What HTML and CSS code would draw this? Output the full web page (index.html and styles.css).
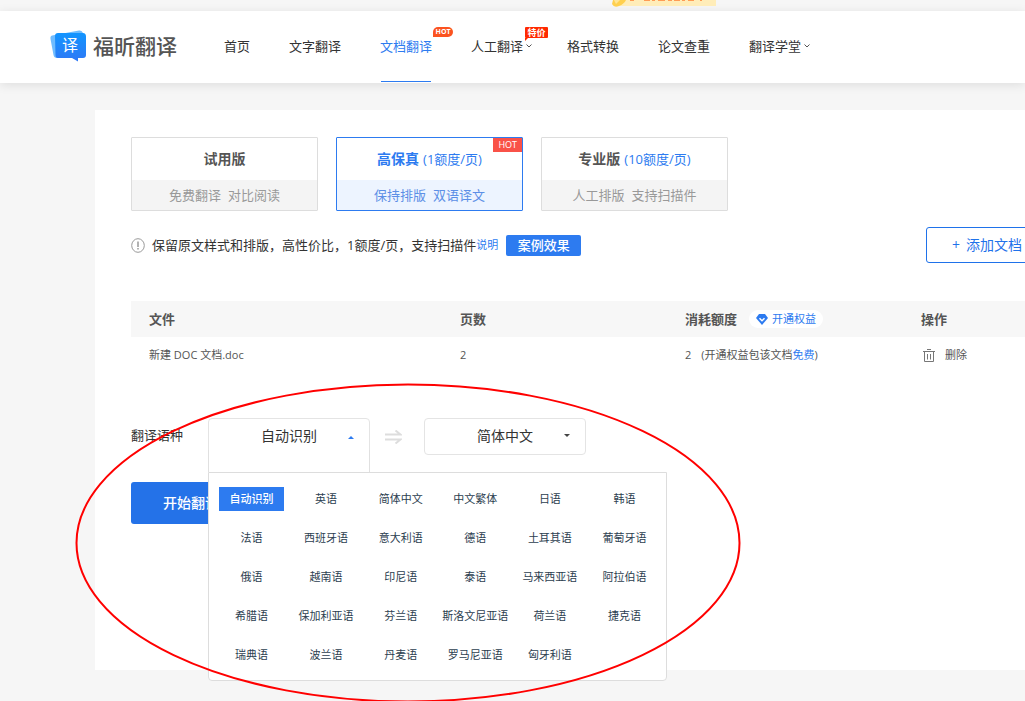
FILE: index.html
```html
<!DOCTYPE html>
<html lang="zh-CN">
<head>
<meta charset="utf-8">
<title>福昕翻译</title>
<link rel="stylesheet" href="styles.css">
</head>
<body>
<div class="page">
  <div class="promo">
    <svg class="promo-art" width="108" height="7" viewBox="0 0 108 7" aria-hidden="true">
      <path d="M12 0H106V6H8z" fill="#ffedb9"/>
      <path d="M3 0H16Q14 4 9 6Q4 8 2 4z" fill="#ffd04f"/>
      <path d="M4 0H10L6 4z" fill="#ffe596"/>
      <path d="M20 0h4M34 0h6M42 0h3M48 0h7M58 0h4M64 0h6M72 0h3M78 0h6M90 0h2" stroke="#ff9c55" stroke-width="2"/>
    </svg>
  </div>

  <header class="header">
    <a class="logo" href="#">
      <span class="logo-mark">
        <svg width="37" height="32" viewBox="0 0 37 32" aria-hidden="true">
          <defs>
            <linearGradient id="mark" x1="0" y1="0" x2="0" y2="1">
              <stop offset="0" stop-color="#1295ff"/><stop offset="1" stop-color="#2f78f5"/>
            </linearGradient>
          </defs>
          <path d="M2 5.500L29 .5Q32 0 33 3L35 24L7 28Q4 28 3.500 25L.5 9Q0 6 2 5.500z" fill="#6fbcff"/>
          <path d="M8 3H33Q36 3 36 6.500V25Q36 28 33 28H28V31.500L22 28H8Q5.500 28 5.500 25L5 6Q5 3 8 3z" fill="url(#mark)"/>
        </svg>
        <span class="logo-glyph">译</span>
      </span>
      <span class="logo-name">福昕翻译</span>
    </a>
    <nav class="nav">
      <a class="nav-item" href="#">首页</a>
      <a class="nav-item" href="#">文字翻译</a>
      <a class="nav-item active" href="#">文档翻译<span class="badge badge-hot">HOT</span></a>
      <a class="nav-item" href="#">人工翻译<svg class="chevron" width="6" height="4" viewBox="0 0 6 4" aria-hidden="true"><path d="M.5 .5L3 3L5.500 .5"/></svg><span class="badge badge-sale">特价</span></a>
      <a class="nav-item" href="#">格式转换</a>
      <a class="nav-item" href="#">论文查重</a>
      <a class="nav-item" href="#">翻译学堂<svg class="chevron" width="6" height="4" viewBox="0 0 6 4" aria-hidden="true"><path d="M.5 .5L3 3L5.500 .5"/></svg></a>
    </nav>
  </header>

  <main class="card">
    <div class="plans">
      <button class="plan" type="button">
        <span class="plan-title"><b>试用版</b></span>
        <span class="plan-desc"><span>免费翻译</span><span>对比阅读</span></span>
      </button>
      <button class="plan selected" type="button">
        <span class="plan-title"><b>高保真</b><span class="price">(1额度/页)</span></span>
        <span class="plan-desc"><span>保持排版</span><span>双语译文</span></span>
        <span class="plan-tag">HOT</span>
      </button>
      <button class="plan" type="button">
        <span class="plan-title"><b>专业版</b><span class="price">(10额度/页)</span></span>
        <span class="plan-desc"><span>人工排版</span><span>支持扫描件</span></span>
      </button>
    </div>

    <div class="tip">
      <svg class="tip-icon" width="14" height="15" viewBox="0 0 14 15" aria-hidden="true">
        <ellipse cx="7" cy="7.500" rx="6.300" ry="6.800" fill="none" stroke="#999"/>
        <path d="M7 3.500v5.500M7 10v1.500" stroke="#999" stroke-width="1.500"/>
      </svg>
      <span class="tip-text">保留原文样式和排版，高性价比，1额度/页，支持扫描件</span>
      <a class="tip-link" href="#">说明</a>
      <button class="case-button" type="button">案例效果</button>
      <button class="add-button" type="button"><span>+</span><span>添加文档</span></button>
    </div>

    <table class="files">
      <thead>
        <tr>
          <th class="col-file">文件</th>
          <th class="col-pages">页数</th>
          <th class="col-cost"><div class="cell">消耗额度
            <a class="benefit" href="#"><svg width="12" height="11" viewBox="0 0 12 11" aria-hidden="true"><path d="M3 0H9L12 4L6 11L0 4z" fill="#2d7bf0"/><path d="M3.500 4.200L6 6.700L8.500 4.200" fill="none" stroke="#fff" stroke-width="1.500"/></svg>开通权益</a></div></th>
          <th>操作</th>
        </tr>
      </thead>
      <tbody>
        <tr>
          <td>新建 DOC 文档.doc</td>
          <td>2</td>
          <td><span class="count">2</span>(开通权益包该文档<a class="free" href="#">免费</a>)</td>
          <td><button class="delete" type="button"><svg width="12" height="13" viewBox="0 0 12 13" aria-hidden="true"><path d="M0 2.500H12M4 .5H8M1.500 2.500V12.500H10.500V2.500M4.500 5V10.500M7.500 5V10.500" fill="none" stroke="#777"/></svg>删除</button></td>
        </tr>
      </tbody>
    </table>

    <div class="languages">
      <label class="languages-label" for="source">翻译语种</label>
      <div class="picker open">
        <select id="source" class="picker-select"><option>自动识别</option></select>
        <svg class="caret" width="6" height="3" viewBox="0 0 6 3" aria-hidden="true"><path d="M0 3L3 0L6 3z" fill="#2d7bf0"/></svg>
        <div class="menu">
          <button class="lang chosen" type="button">自动识别</button>
          <button class="lang" type="button">英语</button>
          <button class="lang" type="button">简体中文</button>
          <button class="lang" type="button">中文繁体</button>
          <button class="lang" type="button">日语</button>
          <button class="lang" type="button">韩语</button>
          <button class="lang" type="button">法语</button>
          <button class="lang" type="button">西班牙语</button>
          <button class="lang" type="button">意大利语</button>
          <button class="lang" type="button">德语</button>
          <button class="lang" type="button">土耳其语</button>
          <button class="lang" type="button">葡萄牙语</button>
          <button class="lang" type="button">俄语</button>
          <button class="lang" type="button">越南语</button>
          <button class="lang" type="button">印尼语</button>
          <button class="lang" type="button">泰语</button>
          <button class="lang" type="button">马来西亚语</button>
          <button class="lang" type="button">阿拉伯语</button>
          <button class="lang" type="button">希腊语</button>
          <button class="lang" type="button">保加利亚语</button>
          <button class="lang" type="button">芬兰语</button>
          <button class="lang" type="button">斯洛文尼亚语</button>
          <button class="lang" type="button">荷兰语</button>
          <button class="lang" type="button">捷克语</button>
          <button class="lang" type="button">瑞典语</button>
          <button class="lang" type="button">波兰语</button>
          <button class="lang" type="button">丹麦语</button>
          <button class="lang" type="button">罗马尼亚语</button>
          <button class="lang" type="button">匈牙利语</button>
        </div>
      </div>
      <svg class="swap" width="17" height="14" viewBox="0 0 17 14" aria-hidden="true"><path d="M0 4.500H15.500L10.500 .5M0 9.500H15.500L10.500 13.500" fill="none" stroke="#ddd" stroke-width="2"/></svg>
      <div class="picker">
        <select class="picker-select" aria-label="目标语种"><option>简体中文</option></select>
        <svg class="caret" width="6" height="3" viewBox="0 0 6 3" aria-hidden="true"><path d="M0 0H6L3 3z" fill="#444"/></svg>
      </div>
    </div>

    <button class="start" type="button">开始翻译</button>
  </main>

  <svg class="marker" width="666" height="320" viewBox="0 0 666 320" aria-hidden="true"><ellipse cx="333" cy="160" rx="331.500" ry="158.500" fill="none" stroke="#f00" stroke-width="2"/></svg>
</div>
</body>
</html>
```

FILE: styles.css
```css
* { box-sizing: border-box; }

body {
  margin: 0;
  background: #f6f6f6;
  color: #333;
  font-family: "Open Sans", "Noto Sans CJK SC", sans-serif;
  font-size: 13px;
  line-height: 20px;
}

a { color: inherit; text-decoration: none; }

button, select {
  margin: 0;
  padding: 0;
  border: 0;
  background: none;
  color: inherit;
  font: inherit;
  cursor: pointer;
}

svg { display: block; flex: none; }

.page { position: relative; min-height: 100vh; overflow: hidden; }

.promo { height: 11px; padding-left: 610px; }

.header {
  display: flex;
  align-items: stretch;
  height: 72px;
  padding-left: 50px;
  background: #fff;
  box-shadow: 0 2px 10px rgba(0, 0, 0, 0.1);
}

.logo { display: flex; align-items: center; gap: 6px; width: 174px; padding-bottom: 2px; }
.logo-mark { position: relative; }
.logo-glyph {
  position: absolute;
  top: 5px;
  left: 12px;
  color: #fff;
  font-size: 16px;
}
.logo-name { color: #555; font-size: 21px; font-weight: 500; line-height: 30px; white-space: nowrap; }

.nav { display: flex; gap: 39px; }
.nav-item {
  position: relative;
  display: flex;
  align-items: center;
  padding-bottom: 2px;
  white-space: nowrap;
}
.nav-item.active { color: #2d7bf0; }
.nav-item.active::after {
  content: "";
  position: absolute;
  right: 1px;
  bottom: 1px;
  left: 1px;
  height: 1px;
  background: #2d7bf0;
}
.chevron { margin: 0 -4px 0 3px; fill: none; stroke: #555; }

.badge { position: absolute; top: 16px; color: #fff; font-weight: 700; text-align: center; }
.badge-hot {
  left: 53px;
  width: 20px;
  height: 10px;
  border-radius: 5px 5px 5px 0;
  background: #fb5320;
  font-size: 7px;
  line-height: 10px;
}
.badge-sale {
  left: 54px;
  width: 23px;
  height: 11px;
  border-radius: 1px;
  background: #ff2a00;
  font-size: 9px;
  line-height: 11px;
}
.badge-sale::after {
  content: "";
  position: absolute;
  top: 11px;
  left: 0;
  border-top: 3px solid #ff2a00;
  border-right: 3px solid transparent;
}

.card {
  margin: 27px -61px 31px 95px;
  padding: 27px 36px 146px;
  background: #fff;
}

.plans { display: flex; gap: 18px; }
.plan {
  position: relative;
  display: flex;
  flex-direction: column;
  width: 187px;
  border: 1px solid #ddd;
  border-radius: 1px;
  color: #999;
}
.plan-title, .plan-desc {
  display: flex;
  justify-content: center;
  align-self: stretch;
}
.plan-title { gap: 4px; padding: 11px 0; color: #555; }
.plan-title b { font-size: 14px; }
.plan-desc { gap: 7px; padding: 5px 0; background: #f4f4f4; }
.price { color: #2d7bf0; }
.plan.selected { border-color: #2d7bf0; color: #5c8fe6; }
.plan.selected .plan-title { color: #2d7bf0; }
.plan.selected .plan-desc { background: #edf4ff; }
.plan-tag {
  position: absolute;
  top: 0;
  right: 0;
  padding: 0 5px;
  background: #f95248;
  color: #fff;
  font-size: 9px;
  line-height: 14px;
}

.tip { display: flex; align-items: center; margin-top: 16px; white-space: nowrap; }
.tip-text { margin-left: 7px; }
.tip-link { color: #2d7bf0; font-size: 11px; }
.case-button {
  margin-left: 8px;
  width: 75px;
  height: 21px;
  border-radius: 2px;
  background: #2d7bf0;
  color: #fff;
  font-weight: 500;
}
.add-button {
  display: flex;
  justify-content: center;
  gap: 6px;
  margin-left: auto;
  padding: 7px 27px 7px 25px;
  border: 1px solid #1f72ea;
  border-radius: 3px;
  color: #1f72ea;
  font-size: 14px;
}

.files {
  width: 100%;
  margin-top: 38px;
  border-collapse: collapse;
  table-layout: fixed;
  color: #555;
  text-align: left;
}
.files th, .files td { height: 36px; padding: 0 18px; white-space: nowrap; }
.files th { background: #f7f7f7; }
.files td { font-size: 11px; }
.col-file { width: 311px; }
.col-pages { width: 225px; }
.col-cost { width: 236px; }
.cell { display: flex; align-items: center; gap: 12px; }
.benefit {
  display: flex;
  align-items: center;
  gap: 4px;
  padding: 0 7px;
  border-radius: 9px;
  background: #fff;
  color: #2d7bf0;
  font-size: 11px;
  font-weight: 400;
  line-height: 18px;
}
.count { margin-right: 10px; }
.free { color: #2d7bf0; }
.delete { display: flex; align-items: center; gap: 10px; padding-left: 2px; }

.languages { display: flex; align-items: center; margin-top: 45px; }
.languages-label { width: 77px; padding-bottom: 3px; }
.picker { position: relative; width: 162px; }
.picker-select {
  display: block;
  width: 100%;
  height: 37px;
  padding-bottom: 2px;
  border: 1px solid #e4e4e4;
  border-radius: 4px;
  background: #fff;
  appearance: none;
  font-size: 14px;
  text-align-last: center;
}
.caret { position: absolute; top: 16px; right: 16px; }
.open .caret { top: 18px; }
.open::after {
  content: "";
  position: absolute;
  top: 32px;
  right: 0;
  left: 0;
  height: 22px;
  border: solid #e0e0e0;
  border-width: 0 1px;
  background: #fff;
}
.swap { margin: 0 22px 0 15px; }

.menu {
  position: absolute;
  z-index: 1;
  top: 54px;
  left: 0;
  display: grid;
  grid-template-columns: repeat(6, 65px);
  justify-content: space-between;
  row-gap: 15px;
  width: 459px;
  padding: 14px 9px 13px 10px;
  border: 1px solid #ddd;
  border-radius: 0 0 4px 4px;
  background: #fff;
}
.lang {
  display: flex;
  align-items: center;
  justify-content: center;
  height: 24px;
  color: #2c3e50;
  font-size: 11px;
  white-space: nowrap;
}
.lang.chosen { background: #2d7bf0; color: #fff; font-weight: 500; }

.start {
  display: block;
  margin-top: 27px;
  padding: 11px 32px;
  border-radius: 3px;
  background: #2472e8;
  color: #fff;
  font-size: 14px;
  font-weight: 500;
}

.marker { position: absolute; z-index: 2; top: 383px; left: 75px; pointer-events: none; }
```
